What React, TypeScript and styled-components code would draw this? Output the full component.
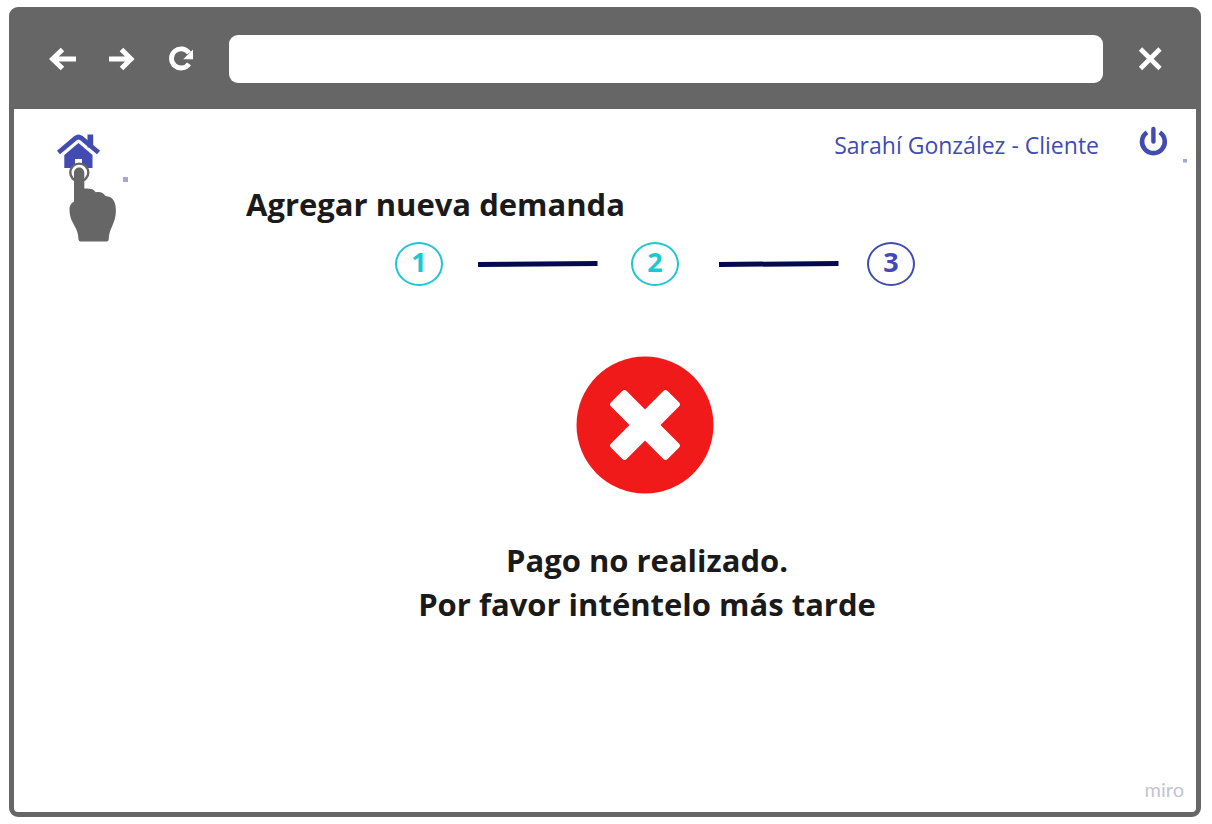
import React from "react";
import styled, { createGlobalStyle } from "styled-components";

const ink = "#1a1a1a";
const chrome = "#666666";
const indigo = "#414bb2";
const teal = "#1cc8cf";
const navy = "#050a4e";

const GlobalStyle = createGlobalStyle`
  *, *::before, *::after { box-sizing: border-box; }
  body {
    margin: 0;
    background: #ffffff;
    color: ${ink};
    font-family: "Open Sans", "Noto Sans", sans-serif;
  }
`;

const Page = styled.div`
  display: flex;
  min-height: 100vh;
  padding: 7px 11px 7px 9px;
`;

const Browser = styled.div`
  flex: 1;
  min-width: 0;
  display: flex;
  flex-direction: column;
  border: 5px solid ${chrome};
  border-radius: 9px;
  background: #ffffff;
`;

const Toolbar = styled.header`
  display: flex;
  align-items: center;
  gap: 32px;
  padding: 23px 29px 26px 35px;
  background: ${chrome};
`;

const IconButton = styled.button<{ $width: number }>`
  display: block;
  flex: none;
  width: ${(p) => p.$width}px;
  padding: 0;
  border: 0;
  background: none;
  cursor: pointer;

  svg {
    display: block;
    width: 100%;
  }
`;

const Address = styled.input`
  flex: 1;
  min-width: 0;
  height: 48px;
  padding: 0 16px;
  border: 0;
  border-radius: 9px;
  background: #ffffff;
  font: inherit;
`;

const Body = styled.div`
  flex: 1;
  display: flex;
`;

const Side = styled.nav`
  flex: none;
  width: 232px;
  padding: 23px 0 0 42px;
`;

const HomeLink = styled.a`
  display: block;
  width: 74px;

  svg {
    display: block;
  }
`;

const Main = styled.main`
  flex: 1;
  min-width: 0;
  display: flex;
  flex-direction: column;
`;

const UserBar = styled.div`
  display: flex;
  justify-content: flex-end;
  align-items: center;
  gap: 40px;
  height: 71px;
  padding-right: 8px;
`;

const UserName = styled.span`
  color: ${indigo};
  font-size: 23px;
  line-height: 32px;
`;

const Wizard = styled.section`
  display: flex;
  flex-direction: column;
  align-items: center;
  padding: 2px 152px 0 0;
`;

const Title = styled.h1`
  align-self: flex-start;
  margin: 0;
  font-size: 31px;
  font-weight: 700;
  line-height: 44px;
`;

const Steps = styled.ol`
  display: flex;
  align-items: center;
  margin: 16px 0 0;
  padding: 0 0 0 20px;
  list-style: none;
`;

const Step = styled.li<{ $color: string }>`
  display: flex;
  justify-content: center;
  width: 48px;
  height: 44px;
  border: 2px solid ${(p) => p.$color};
  border-radius: 50%;
  color: ${(p) => p.$color};
  font-size: 27px;
  font-weight: 700;
  line-height: 36px;
`;

const Link = styled.li`
  svg {
    display: block;
  }
`;

const ErrorMark = styled.svg`
  display: block;
  margin-top: 70px;
`;

const Message = styled.p`
  margin: 44px 0 0;
  padding-left: 4px;
  font-size: 31px;
  font-weight: 700;
  line-height: 44px;
  text-align: center;
`;

const Brand = styled.footer`
  margin-top: auto;
  padding: 0 12px 11px 0;
  color: #c4c4ce;
  font-family: Lato, sans-serif;
  font-size: 20px;
  font-weight: 400;
  line-height: 24px;
  text-align: right;
`;

const BackIcon = () => (
  <svg viewBox="0 0 28 28" fill="none" stroke="#fff" strokeWidth="5" aria-hidden="true">
    <path d="M27 14H4M13.5 4.5 3.5 14l10 9.5" />
  </svg>
);

const ForwardIcon = () => (
  <svg viewBox="0 0 28 28" fill="none" stroke="#fff" strokeWidth="5" aria-hidden="true">
    <path d="M0 14h22M12.5 4.5 22 14l-9.500 9.500" />
  </svg>
);

const ReloadIcon = () => (
  <svg viewBox="0 0 28 28" aria-hidden="true">
    <path d="M20 18.800A9.600 9.600 0 1 1 20 8" fill="none" stroke="#fff" strokeWidth="4.800" />
    <path d="M24 4.500v9.800h-9.800z" fill="#fff" />
  </svg>
);

const CloseIcon = () => (
  <svg viewBox="0 0 32 28" aria-hidden="true">
    <path d="M5.500 4 25 23.500M25 4 5.500 23.500" stroke="#fff" strokeWidth="4.600" />
  </svg>
);

const HomeIcon = () => (
  <svg width="74" height="111" viewBox="56 132 74 111" aria-hidden="true">
    <g fill={indigo}>
      <path d="M87.500 134.500h5.700v13h-5.700z" />
      <path d="M78.500 143 92.500 155v13H64.300v-13z" />
    </g>
    <path d="M58.500 152.500 75.800 138q2.700-2 5.400 0L98.500 152.500" fill="none" stroke={indigo} strokeWidth="4.800" />
    <path d="M75 159h7v6h-7z" fill="#fff" />
    <circle cx="79.300" cy="172.600" r="9" fill="#fff" stroke={chrome} strokeWidth="2.400" />
    <path
      d="M74 173c0-7.500 10.300-7.500 10.300 0v15.500c4 0 7.200 0 9 1.300l2.500 2.400c5-.7 7.200.3 9.700 3.700 7.500.5 10.700 6 10.400 15.600-.3 12.500-7 16.500-7.200 28q-.2 2-2 2H80.500q-1.800 0-2-2c-.2-14-9-15.500-9-30.500 0-3.500 2-6.500 4.500-7.300z"
      fill={chrome}
    />
    <path d="M123 177h5v5h-5z" fill="#a3a6d8" />
  </svg>
);

const PowerIcon = () => (
  <svg viewBox="1139 124 49 42" aria-hidden="true">
    <path d="M1147 132.300a11.400 11.400 0 1 0 12.800 0" fill="none" stroke={indigo} strokeWidth="4.600" />
    <path d="M1153.400 129v12.500" stroke={indigo} strokeWidth="4.400" strokeLinecap="round" />
    <path d="M1183 159h4v3.500h-4z" fill="#a3a6d8" />
  </svg>
);

const Connector = ({ start }: { start: number }) => (
  <Link aria-hidden="true">
    <svg width="188" height="12" viewBox="0 0 188 12">
      <path d={`M${start} 6.500l119.500-1`} stroke={navy} strokeWidth="5" />
    </svg>
  </Link>
);

export default function App() {
  return (
    <>
      <GlobalStyle />
      <Page>
        <Browser>
          <Toolbar>
            <IconButton type="button" $width={28} aria-label="Atrás">
              <BackIcon />
            </IconButton>
            <IconButton type="button" $width={28} aria-label="Adelante">
              <ForwardIcon />
            </IconButton>
            <IconButton type="button" $width={28} aria-label="Recargar">
              <ReloadIcon />
            </IconButton>
            <Address type="text" aria-label="Dirección" />
            <IconButton type="button" $width={32} aria-label="Cerrar">
              <CloseIcon />
            </IconButton>
          </Toolbar>
          <Body>
            <Side>
              <HomeLink href="#" aria-label="Inicio">
                <HomeIcon />
              </HomeLink>
            </Side>
            <Main>
              <UserBar>
                <UserName>Sarahí González - Cliente</UserName>
                <IconButton type="button" $width={49} aria-label="Cerrar sesión">
                  <PowerIcon />
                </IconButton>
              </UserBar>
              <Wizard>
                <Title>Agregar nueva demanda</Title>
                <Steps>
                  <Step $color={teal}>1</Step>
                  <Connector start={35} />
                  <Step $color={teal}>2</Step>
                  <Connector start={40} />
                  <Step $color={indigo}>3</Step>
                </Steps>
                <ErrorMark width="138" height="138" viewBox="0 0 138 138" role="img" aria-label="Error">
                  <circle cx="69" cy="69" r="68.500" fill="#f01a1a" />
                  <g fill="#fff" transform="rotate(45 69 69)">
                    <rect x="58" y="29" width="22" height="80" rx="3" />
                    <rect x="29" y="58" width="80" height="22" rx="3" />
                  </g>
                </ErrorMark>
                <Message>
                  Pago no realizado.
                  <br />
                  Por favor inténtelo más tarde
                </Message>
              </Wizard>
              <Brand>miro</Brand>
            </Main>
          </Body>
        </Browser>
      </Page>
    </>
  );
}
